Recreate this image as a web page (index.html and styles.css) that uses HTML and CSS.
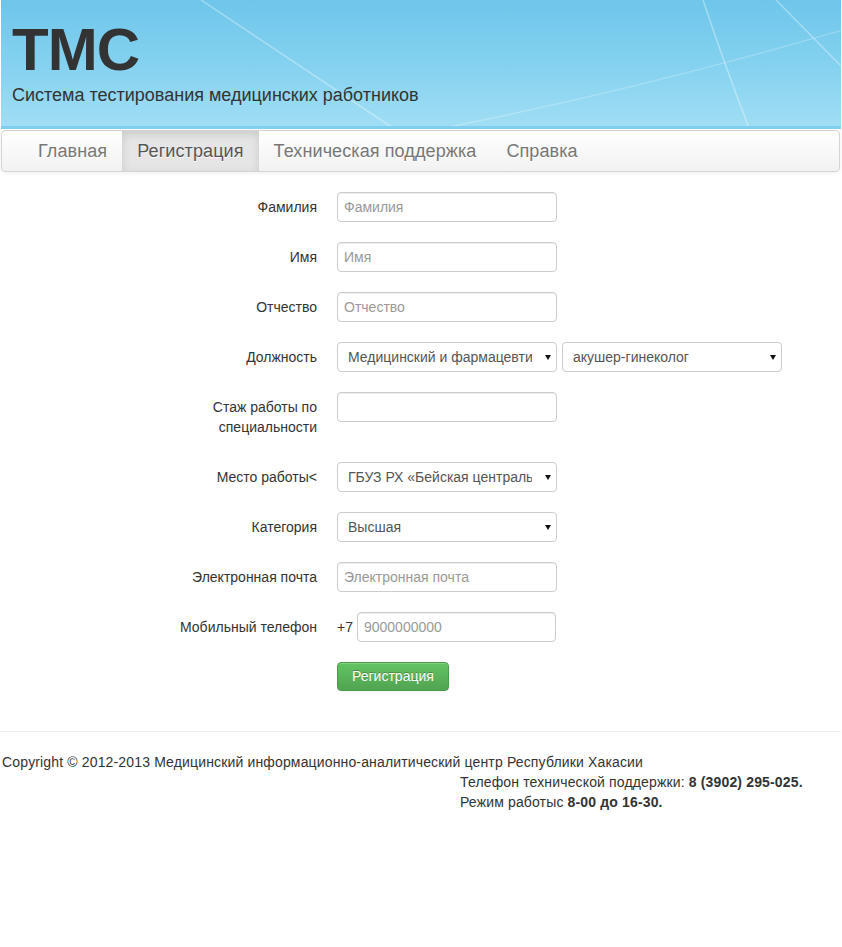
FILE: index.html
```html
<!DOCTYPE html>
<html lang="ru">
<head>
<meta charset="utf-8">
<title>ТМС — Регистрация</title>
<link rel="stylesheet" href="styles.css">
</head>
<body>
<div class="page">
  <header class="header">
    <svg class="header-lines" width="840" height="126" viewBox="0 0 840 126" aria-hidden="true">
      <path d="M200 0 L392 128" />
      <path d="M702 0 Q722 60 748 128" />
      <path d="M775 0 L842 68" />
      <path class="faint" d="M380 140 Q600 100 842 30" />
    </svg>
    <h1 class="brand">ТМС</h1>
    <p class="tagline">Система тестирования медицинских работников</p>
  </header>

  <nav class="navbar">
    <ul class="nav">
      <li class="nav-item"><a class="nav-link">Главная</a></li>
      <li class="nav-item active"><a class="nav-link">Регистрация</a></li>
      <li class="nav-item"><a class="nav-link">Техническая поддержка</a></li>
      <li class="nav-item"><a class="nav-link">Справка</a></li>
    </ul>
  </nav>

  <form class="form">
    <div class="row">
      <label class="label">Фамилия</label>
      <div class="controls"><input class="input" type="text" placeholder="Фамилия"></div>
    </div>
    <div class="row">
      <label class="label">Имя</label>
      <div class="controls"><input class="input" type="text" placeholder="Имя"></div>
    </div>
    <div class="row">
      <label class="label">Отчество</label>
      <div class="controls"><input class="input" type="text" placeholder="Отчество"></div>
    </div>
    <div class="row">
      <label class="label">Должность</label>
      <div class="controls">
        <span class="select-wrap"><select class="select"><option>Медицинский и фармацевтический персонал</option></select></span>
        <span class="select-wrap"><select class="select"><option>акушер-гинеколог</option></select></span>
      </div>
    </div>
    <div class="row row-tall">
      <label class="label">Стаж работы по специальности</label>
      <div class="controls"><input class="input" type="text"></div>
    </div>
    <div class="row">
      <label class="label">Место работы&lt;</label>
      <div class="controls">
        <span class="select-wrap"><select class="select"><option>ГБУЗ РХ «Бейская центральная районная больница»</option></select></span>
      </div>
    </div>
    <div class="row">
      <label class="label">Категория</label>
      <div class="controls">
        <span class="select-wrap"><select class="select"><option>Высшая</option></select></span>
      </div>
    </div>
    <div class="row">
      <label class="label">Электронная почта</label>
      <div class="controls"><input class="input" type="text" placeholder="Электронная почта"></div>
    </div>
    <div class="row">
      <label class="label">Мобильный телефон</label>
      <div class="controls phone"><span class="prefix">+7</span><input class="input input-phone" type="text" placeholder="9000000000"></div>
    </div>
    <div class="row">
      <span class="label"></span>
      <div class="controls"><button class="btn" type="button">Регистрация</button></div>
    </div>
  </form>

  <hr class="rule">

  <footer class="footer">
    <p class="copy">Copyright © 2012-2013 Медицинский информационно-аналитический центр Республики Хакасии</p>
    <div class="contacts">
      <p class="contact-line">Телефон технической поддержки: <b>8 (3902) 295-025.</b></p>
      <p class="contact-line">Режим работыс <b>8-00 до 16-30.</b></p>
    </div>
  </footer>
</div>
</body>
</html>
```

FILE: styles.css
```css
* { box-sizing: border-box; }

html, body {
  margin: 0;
  padding: 0;
  background: #fff;
}

body {
  font-family: "Liberation Sans", Arial, sans-serif;
  font-size: 14px;
  line-height: 20px;
  color: #333;
}

.page {
  width: 840px;
  margin-left: 1px;
}

/* Header */
.header {
  position: relative;
  height: 129px;
  padding: 18px 0 0 11px;
  background: linear-gradient(to bottom, #6ec6ea 0%, #86d2f0 55%, #a0def4 100%);
  border-bottom: 3px solid #80cff0;
  overflow: hidden;
}

.header-lines {
  position: absolute;
  left: 0;
  top: 0;
  pointer-events: none;
}

.header-lines path {
  fill: none;
  stroke: rgba(255, 255, 255, 0.35);
  stroke-width: 1.5;
}

.header-lines .faint {
  stroke: rgba(255, 255, 255, 0.22);
}

.brand {
  position: relative;
  margin: 0;
  font-size: 60px;
  line-height: 64px;
  font-weight: bold;
  color: #333;
  letter-spacing: -1px;
}

.tagline {
  position: relative;
  margin: 2px 0 0;
  font-size: 18px;
  line-height: 22px;
  color: #333;
}

/* Navbar */
.navbar {
  margin-top: 1px;
  width: 839px;
  height: 42px;
  padding: 0 20px;
  background: linear-gradient(to bottom, #ffffff, #f2f2f2);
  border: 1px solid #d4d4d4;
  border-radius: 4px;
  box-shadow: 0 1px 4px rgba(0, 0, 0, 0.065);
}

.nav {
  display: flex;
  margin: 0 0 0 1px;
  padding: 0;
  list-style: none;
}

.nav-link {
  display: block;
  padding: 10px 15px;
  font-size: 18px;
  line-height: 20px;
  letter-spacing: 0.1px;
  color: #777;
  text-shadow: 0 1px 0 #fff;
}

.nav-item.active .nav-link {
  color: #555;
  background: #e5e5e5;
  box-shadow: inset 0 3px 8px rgba(0, 0, 0, 0.125);
}

/* Form */
.form {
  margin-top: 20px;
  padding-left: 156px;
}

.row {
  display: grid;
  grid-template-columns: 160px auto;
  column-gap: 20px;
  align-items: start;
  margin-bottom: 20px;
}

.row-tall {
  margin-bottom: 25px;
}

.label {
  padding-top: 5px;
  text-align: right;
  line-height: 20px;
}

.controls {
  display: flex;
  gap: 5px;
  align-items: center;
}

.input {
  width: 220px;
  height: 30px;
  padding: 4px 6px;
  font-family: inherit;
  font-size: 14px;
  line-height: 20px;
  color: #555;
  background: #fff;
  border: 1px solid #ccc;
  border-radius: 4px;
  box-shadow: inset 0 1px 1px rgba(0, 0, 0, 0.075);
  outline: none;
}

.input::placeholder { color: #999; }

.phone { gap: 4px; }

.prefix { line-height: 20px; }

.input-phone { width: 199px; }

.select-wrap {
  position: relative;
  display: block;
}

.select-wrap::after {
  content: "";
  position: absolute;
  right: 6px;
  top: 13px;
  border-left: 3px solid transparent;
  border-right: 3px solid transparent;
  border-top: 5px solid #111;
  pointer-events: none;
}

.select {
  -webkit-appearance: none;
  appearance: none;
  display: block;
  width: 220px;
  height: 30px;
  padding: 4px 24px 4px 10px;
  font-family: inherit;
  font-size: 14px;
  line-height: 20px;
  color: #555;
  background: #fff;
  border: 1px solid #ccc;
  border-radius: 4px;
  outline: none;
}

.btn {
  height: 29px;
  padding: 4px 14px;
  font-family: inherit;
  font-size: 14px;
  line-height: 19px;
  color: #fff;
  text-shadow: 0 -1px 0 rgba(0, 0, 0, 0.25);
  background: linear-gradient(to bottom, #62c462, #51a351);
  border: 1px solid #4a9a4a;
  border-radius: 4px;
  box-shadow: inset 0 1px 0 rgba(255, 255, 255, 0.2), 0 1px 2px rgba(0, 0, 0, 0.05);
}

/* Footer */
.rule {
  margin: 40px 0 20px -1px;
  height: 0;
  border: 0;
  border-top: 1px solid #eee;
}

.footer {
  letter-spacing: 0.15px;
}

.footer p {
  margin: 0;
}

.copy {
  margin-left: 1px !important;
}

.contacts {
  padding-left: 459px;
}
```
